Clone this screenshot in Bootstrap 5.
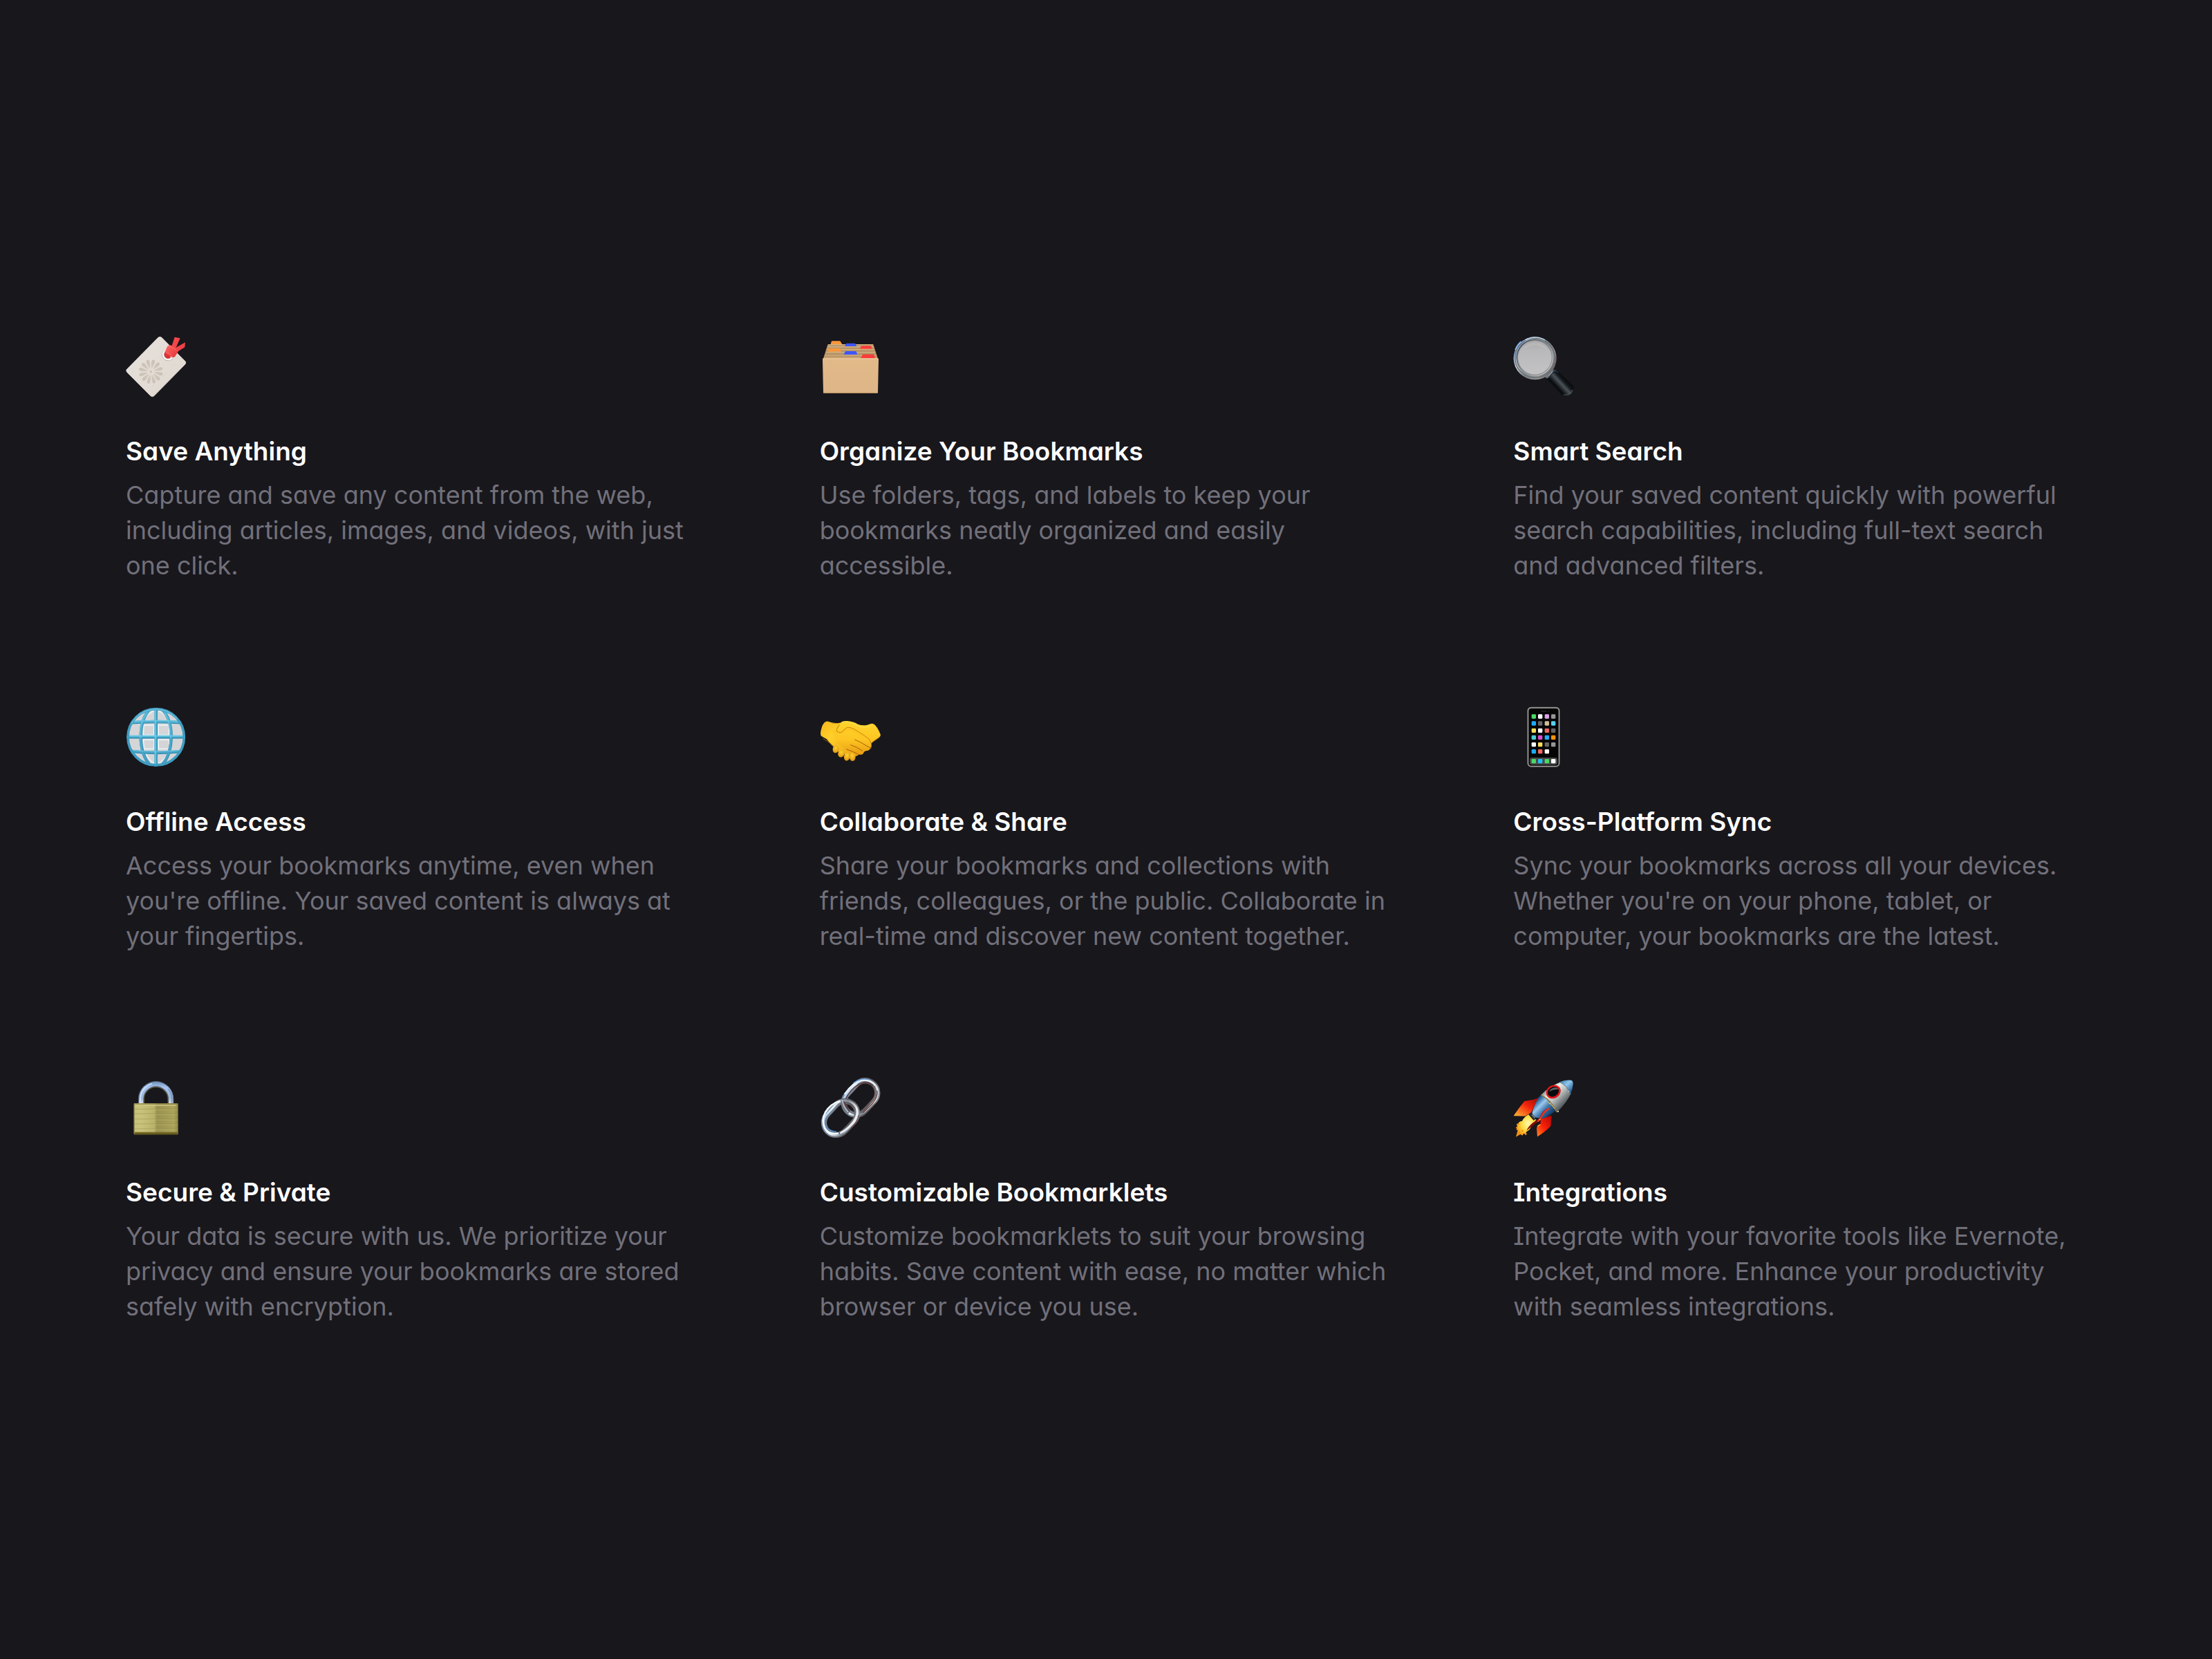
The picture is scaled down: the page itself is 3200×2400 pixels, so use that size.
<!DOCTYPE html>
<html lang="en">
<head>
<meta charset="utf-8">
<meta name="viewport" content="width=device-width, initial-scale=1">
<title>Features</title>
<link href="https://cdn.jsdelivr.net/npm/bootstrap@5.3.0/dist/css/bootstrap.min.css" rel="stylesheet">
<style>
  body {
    background: #18171c;
    color: #fff;
    font-family: Inter, "Liberation Sans", sans-serif;
    font-feature-settings: "cv11", "cv08";
  }
  .feature-wrap { padding: 2px 179px 0 182px; }
  .feature-grid { --bs-gutter-x: 172px; --bs-gutter-y: 178px; }
  .feature-icon { width: 88px; height: 88px; margin-bottom: 53px; display: block; overflow: visible; }
  .feature-title { font-size: 37px; line-height: 51px; font-weight: 600; margin-bottom: 13px; }
  .feature-text { font-size: 36px; line-height: 51px; color: #71707a; }
</style>
</head>
<body>
<main class="container-fluid feature-wrap min-vh-100 d-flex flex-column justify-content-center">
  <div class="row row-cols-3 feature-grid">

    <section class="col">
      <svg class="feature-icon" viewBox="36 33 264 264" aria-hidden="true">
        <defs>
          <linearGradient id="tagPaper" x1="0" y1="0" x2="1" y2="1"><stop offset="0" stop-color="#e7e2dc"/><stop offset="1" stop-color="#ded7cf"/></linearGradient>
          <linearGradient id="petalFill" x1="0" y1="0" x2="0" y2="1"><stop offset="0" stop-color="#c9c1b5"/><stop offset="1" stop-color="#d3cbc0"/></linearGradient>
          <linearGradient id="knotFill" x1="0" y1="0" x2="1" y2="1"><stop offset="0" stop-color="#ff6661"/><stop offset="1" stop-color="#e33337"/></linearGradient>
          <path id="petal" d="M0-9C-4-20-9-36-8-46Q-5-54 0-54Q5-54 8-46C9-36 4-20 0-9Z"/>
        </defs>
        <path d="M176 39Q184 33 192 39L294 142Q301 149 294 156L159 293Q151 300 143 293L40 190Q34 183 40 177Z" fill="url(#tagPaper)"/>
        <path d="M40 190L143 293Q151 300 159 293L294 156" fill="none" stroke="#c8bfb5" stroke-width="2"/>
        <path d="M147 71l9-8M60 190l14-5M235 165l18-9M202 208l8-12M152 251l7-6M100 117l14-11M250 126l14 6" stroke="#d7cfc6" stroke-width="2"/>
        <g transform="translate(145 188)" fill="url(#petalFill)" stroke="#eee9e2" stroke-width="1">
          <use href="#petal" transform="rotate(13)"/><use href="#petal" transform="rotate(43)"/><use href="#petal" transform="rotate(73)"/><use href="#petal" transform="rotate(103)"/><use href="#petal" transform="rotate(133)"/><use href="#petal" transform="rotate(163)"/><use href="#petal" transform="rotate(193)"/><use href="#petal" transform="rotate(223)"/><use href="#petal" transform="rotate(253)"/><use href="#petal" transform="rotate(283)"/><use href="#petal" transform="rotate(313)"/><use href="#petal" transform="rotate(343)"/>
        </g>
        <circle cx="145" cy="188" r="6" fill="#d0c7bb"/>
        <circle cx="216" cy="118" r="18" fill="#cfc7c0"/>
        <path d="M200 104L213 98L232 115L228 130L213 133L202 121Z" fill="#dc3236"/>
        <path d="M203 100A21 21 0 1 0 237 129" fill="none" stroke="#aaa39e" stroke-width="10"/>
        <path d="M203 99A21 21 0 1 0 237 128" fill="none" stroke="#f8f7f5" stroke-width="7"/>
        <path d="M234 80L248 38L272 43L250 91Z" fill="#f24649"/>
        <path d="M247 87L294 61L292 82L255 105Z" fill="#ef4246"/>
        <path d="M216 79Q224 68 236 76L260 91Q267 96 261 105L249 123Q243 128 235 124L212 111Q205 106 208 98Z" fill="url(#knotFill)"/>
        <path d="M218 82Q226 75 235 81L257 95M213 101L238 119" fill="none" stroke="#ff7873" stroke-width="2"/>
      </svg>
      <h2 class="feature-title">Save Anything</h2>
      <p class="feature-text mb-0">Capture and save any content from the web, including articles, images, and videos, with just one click.</p>
    </section>

    <section class="col">
      <svg class="feature-icon" viewBox="33 33 264 264" aria-hidden="true">
        <defs>
          <linearGradient id="boxFront" x1="0" y1="0" x2="0" y2="1"><stop offset="0" stop-color="#e2ba8a"/><stop offset="1" stop-color="#deb586"/></linearGradient>
          <linearGradient id="dividerFill" x1="0" y1="0" x2="0" y2="1"><stop offset="0" stop-color="#dfba87"/><stop offset="1" stop-color="#9c7b52"/></linearGradient>
          <clipPath id="dividerClip"><path d="M70 50H262Q265 69 266 73L286 134H47L66 74Z"/></clipPath>
        </defs>
        <path d="M70 69H262Q265 69 266 73L286 134H47L66 74Q67 69 70 69Z" fill="#b28e60"/>
        <path d="M80 69L83 58Q84 55 88 55H118Q122 55 124 59L130 69Z" fill="#fa963b"/>
        <g clip-path="url(#dividerClip)">
          <rect x="69" y="69" width="196" height="11" fill="url(#dividerFill)"/>
          <path d="M141 78L145 69Q147 65 151 65H183Q187 65 189 69L193 78Z" fill="#3e55f8"/>
          <rect x="66" y="78" width="202" height="12" fill="url(#dividerFill)"/>
          <path d="M206 90L211 80Q213 76 217 76H251Q255 76 257 80L261 90Z" fill="#fa3c3b"/>
          <rect x="62" y="89" width="208" height="13" fill="url(#dividerFill)"/>
          <path d="M68 101L71 91Q73 87 77 87H116Q120 87 122 91L126 101Z" fill="#fa963b"/>
          <rect x="59" y="101" width="215" height="14" fill="url(#dividerFill)"/>
          <path d="M137 115L142 103Q144 99 148 99H186Q190 99 192 103L196 115Z" fill="#3e55f8"/>
          <rect x="55" y="114" width="223" height="10" fill="url(#dividerFill)"/>
          <rect x="51" y="122" width="230" height="10" fill="#c7a06f"/>
        </g>
        <path d="M211 130L217 117Q219 113 223 113H263Q267 113 269 117L274 130Z" fill="#fa3c3b"/>
        <path d="M48 130H284Q288 130 288 135L285 278Q285 282 281 282H52Q48 282 48 278L45 135Q45 130 48 130Z" fill="url(#boxFront)"/>
        <path d="M47 132H286" stroke="#efcea3" stroke-width="3"/><path d="M49 280H284" stroke="#b9915f" stroke-width="3"/>
      </svg>
      <h2 class="feature-title">Organize Your Bookmarks</h2>
      <p class="feature-text mb-0">Use folders, tags, and labels to keep your bookmarks neatly organized and easily accessible.</p>
    </section>

    <section class="col">
      <svg class="feature-icon" viewBox="27 33 264 264" aria-hidden="true">
        <defs>
          <linearGradient id="rimOuter" x1="0" y1=".2" x2="1" y2=".8"><stop offset="0" stop-color="#6eaaf0"/><stop offset=".25" stop-color="#dbe3ea"/><stop offset=".5" stop-color="#7b848c"/><stop offset=".75" stop-color="#949494"/><stop offset="1" stop-color="#5b5b5e"/></linearGradient>
          <linearGradient id="rimInner" x1="0" y1="0" x2="1" y2="1"><stop offset="0" stop-color="#2c3b49"/><stop offset=".5" stop-color="#85898c"/><stop offset="1" stop-color="#cfcfcf"/></linearGradient>
          <linearGradient id="lensFill" x1="0" y1="0" x2="0" y2="1"><stop offset="0" stop-color="#aaa9ab"/><stop offset=".3" stop-color="#b9b8ba"/><stop offset="1" stop-color="#c3c2c4"/></linearGradient>
          <linearGradient id="gripFill" gradientUnits="userSpaceOnUse" x1="204" y1="262" x2="258" y2="212"><stop offset="0" stop-color="#15181b"/><stop offset=".2" stop-color="#090b0e"/><stop offset=".52" stop-color="#4c5359"/><stop offset=".72" stop-color="#14181c"/><stop offset="1" stop-color="#050506"/></linearGradient>
        </defs>
        <path d="M163 211L184 181L212 181L199 196L178 221Q171 213 163 211Z" fill="#77797b"/>
        <path d="M182 210L201 187" stroke="#d8d8d8" stroke-width="6"/>
        <circle cx="122" cy="130" r="93" fill="url(#rimOuter)"/>
        <circle cx="121" cy="128" r="86" fill="none" stroke="#6b7177" stroke-width="5"/>
        <circle cx="121" cy="127" r="81" fill="url(#rimInner)"/>
        <circle cx="121" cy="127" r="76" fill="#8d8e91"/>
        <circle cx="121" cy="127" r="73" fill="url(#lensFill)"/>
        <path d="M66 96Q86 61 123 61T178 98Q155 74 122 75T66 96Z" fill="#c8c8c9" opacity=".35"/>
        <path d="M61 57A93 93 0 0 0 36 93" fill="none" stroke="#8bc0fc" stroke-width="5"/>
        <path d="M80 50A90 90 0 0 1 166 51" fill="none" stroke="#c3dcf3" stroke-width="4"/>
        <path d="M213 118A93 93 0 0 1 206 167" fill="none" stroke="#754c49" stroke-width="3"/>
        <path d="M174 218L202 184Q215 178 227 191L287 249Q298 264 281 281Q263 299 244 294Q240 293 237 290L180 231Z" fill="url(#gripFill)"/>
        <path d="M179 216L204 187Q214 183 223 192" fill="none" stroke="#26364b" stroke-width="4"/>
        <path d="M245 289Q271 292 286 267" fill="none" stroke="#4c5054" stroke-width="4"/>
      </svg>
      <h2 class="feature-title">Smart Search</h2>
      <p class="feature-text mb-0">Find your saved content quickly with powerful search capabilities, including full-text search and advanced filters.</p>
    </section>

    <section class="col">
      <svg class="feature-icon" viewBox="36 30 264 264" aria-hidden="true">
        <defs>
          <linearGradient id="globeLine" x1="0" y1="0" x2="0" y2="1"><stop offset="0" stop-color="#53b7d8"/><stop offset="1" stop-color="#429fc4"/></linearGradient>
          <clipPath id="globeClip"><circle cx="167" cy="163" r="127"/></clipPath>
        </defs>
        <circle cx="167" cy="163" r="124" fill="#d5d5d8"/>
        <g clip-path="url(#globeClip)" fill="none">
          <g stroke="#eaf6fa" stroke-width="4"><path d="M114 111H158V154H112ZM178 111H223V154H178ZM112 174H158V214H116ZM178 174H224V214H178Z"/><path d="M123 232Q133 262 158 276M219 232Q206 262 178 276M116 91Q127 62 158 49M220 91Q208 63 178 49"/></g>
          <g stroke="#2f88aa" stroke-width="13"><path d="M48 101Q167 91 287 101M40 163H294M50 224Q167 238 286 224"/><path d="M167 36V291M143 39Q100 83 101 163T143 287M191 39Q234 83 233 163T191 287"/></g>
          <g stroke="url(#globeLine)" stroke-width="10"><path d="M48 99Q167 90 287 99M50 222Q167 236 286 222M143 39Q99 83 100 163T143 287M191 39Q234 83 232 163T191 287"/></g>
          <path d="M40 160H294M165 36V291" stroke="#54b8d9" stroke-width="9"/>
          <path d="M50 96Q167 86 285 96M42 157H292M52 219Q167 232 284 219M163 38V289M96 163Q96 97 124 61M228 163Q228 97 205 61" stroke="#8bd8ee" stroke-width="2"/>
        </g>
        <circle cx="167" cy="163" r="122" fill="none" stroke="#3f9dc1" stroke-width="11"/>
        <path d="M60 105A122 122 0 0 1 260 85" fill="none" stroke="#84d2e9" stroke-width="3"/>
      </svg>
      <h2 class="feature-title">Offline Access</h2>
      <p class="feature-text mb-0">Access your bookmarks anytime, even when you're offline. Your saved content is always at your fingertips.</p>
    </section>

    <section class="col">
      <svg class="feature-icon" viewBox="33 30 264 264" aria-hidden="true">
        <defs>
          <linearGradient id="skinMain" x1="0" y1="0" x2="0" y2="1"><stop offset="0" stop-color="#ffd52e"/><stop offset=".55" stop-color="#fdc522"/><stop offset="1" stop-color="#e89d12"/></linearGradient>
          <linearGradient id="skinArm" x1="0" y1="0" x2="1" y2="1"><stop offset="0" stop-color="#f7b51b"/><stop offset=".35" stop-color="#ffd02a"/><stop offset="1" stop-color="#e8a014"/></linearGradient>
          <radialGradient id="skinTip" cx=".45" cy=".35" r=".7"><stop offset="0" stop-color="#ffd231"/><stop offset="1" stop-color="#dc920f"/></radialGradient>
        </defs>
        <path d="M54 99Q62 91 74 97Q94 105 119 101L151 108L198 150L204 231Q202 245 188 246L120 235L96 207Q74 187 63 172L39 158Q33 149 40 126Q44 108 54 99Z" fill="url(#skinArm)"/>
        <g fill="url(#skinTip)"><ellipse cx="102" cy="215" rx="13" ry="17" transform="rotate(12 102 215)"/><ellipse cx="126" cy="234" rx="14" ry="17" transform="rotate(18 126 234)"/><ellipse cx="151" cy="248" rx="13" ry="18" transform="rotate(14 151 248)"/><ellipse cx="175" cy="249" rx="13" ry="18"/></g>
        <path d="M107 135Q103 128 111 117L124 99Q133 92 151 93Q179 95 198 107Q216 114 236 111L255 105Q264 103 273 111Q287 126 296 151Q298 160 290 164L266 181L256 191Q260 204 252 213Q246 223 233 223Q224 225 221 235Q214 243 199 237L150 219L108 189L90 150Z" fill="url(#skinMain)"/>
        <path d="M91 136Q116 152 138 134L155 126Q191 137 226 162" fill="none" stroke="#fdc522" stroke-width="12"/>
        <path d="M106 134Q109 144 124 143Q132 142 139 130Q149 117 165 121Q184 128 205 142T246 171L256 190" fill="none" stroke="#cf850c" stroke-width="3"/>
        <path d="M185 174Q209 184 236 201T254 207M167 197Q193 205 218 223M149 216Q172 223 198 237" fill="none" stroke="#a76004" stroke-width="3" stroke-linecap="round"/>
        <path d="M107 136Q104 126 119 109" fill="none" stroke="#bb7509" stroke-width="3"/>
        <path d="M84 102Q104 106 116 103M47 169Q76 184 94 207M256 187Q268 182 292 164" fill="none" stroke="#c4830e" stroke-width="3" opacity=".7"/>
        <path d="M131 98Q160 94 194 112T258 112" fill="none" stroke="#ffe454" stroke-width="4" opacity=".8"/>
      </svg>
      <h2 class="feature-title">Collaborate &amp; Share</h2>
      <p class="feature-text mb-0">Share your bookmarks and collections with friends, colleagues, or the public. Collaborate in real-time and discover new content together.</p>
    </section>

    <section class="col">
      <svg class="feature-icon" viewBox="27 30 264 264" aria-hidden="true">
        <rect x="88" y="32" width="142" height="261" rx="17" fill="#696967"/>
        <rect x="90" y="34" width="138" height="257" rx="15" fill="#a3a29f"/>
        <rect x="94" y="38" width="130" height="249" rx="12" fill="#050506"/>
        <rect x="147" y="48" width="26" height="5" rx="2" fill="#202022"/><circle cx="181" cy="51" r="3" fill="#202027"/>
        <rect x="99" y="252" width="120" height="31" rx="10" fill="#4a4a4b"/>
        <g>
          <g fill="#4cd964"><rect x="107" y="64" width="19" height="19" rx="4"/><rect x="107" y="258" width="19" height="19" rx="4"/><rect x="164" y="258" width="19" height="19" rx="4"/></g>
          <g fill="#fff"><rect x="135" y="64" width="19" height="19" rx="4"/><rect x="135" y="125" width="19" height="19" rx="4"/><rect x="107" y="186" width="19" height="19" rx="4"/><rect x="164" y="216" width="19" height="19" rx="4"/><rect x="192" y="258" width="19" height="19" rx="4"/></g>
          <g fill="#20aaf7"><rect x="107" y="94" width="19" height="19" rx="4"/><rect x="164" y="155" width="19" height="19" rx="4"/><rect x="107" y="216" width="19" height="19" rx="4"/></g>
          <g fill="#656565"><rect x="135" y="94" width="19" height="19" rx="4"/><rect x="192" y="125" width="19" height="19" rx="4"/><rect x="164" y="186" width="19" height="19" rx="4"/></g>
          <g fill="#969696"><rect x="192" y="64" width="19" height="19" rx="4"/><rect x="192" y="186" width="19" height="19" rx="4"/></g>
          <g fill="#ffdc59"><rect x="107" y="125" width="19" height="19" rx="4"/><rect x="135" y="186" width="19" height="19" rx="4"/></g>
          <g fill="#ef665c"><rect x="164" y="125" width="19" height="19" rx="4"/><rect x="135" y="216" width="19" height="19" rx="4"/></g>
          <rect x="164" y="64" width="19" height="19" rx="4" fill="#dba3e7"/>
          <rect x="164" y="94" width="19" height="19" rx="4" fill="#d3bd98"/>
          <rect x="192" y="94" width="19" height="19" rx="4" fill="#56d2ec"/>
          <rect x="107" y="155" width="19" height="19" rx="4" fill="#4acbd3"/>
          <rect x="135" y="155" width="19" height="19" rx="4" fill="#d74bd4"/>
          <rect x="192" y="155" width="19" height="19" rx="4" fill="#ff9208"/>
          <rect x="135" y="258" width="19" height="19" rx="4" fill="#1bc1f4"/>
        </g>
      </svg>
      <h2 class="feature-title">Cross-Platform Sync</h2>
      <p class="feature-text mb-0">Sync your bookmarks across all your devices. Whether you're on your phone, tablet, or computer, your bookmarks are the latest.</p>
    </section>

    <section class="col">
      <svg class="feature-icon" viewBox="36 30 264 264" aria-hidden="true">
        <defs>
          <linearGradient id="brass" x1="0" y1="0" x2="1" y2="0"><stop offset="0" stop-color="#c9c278"/><stop offset=".15" stop-color="#c8c27b"/><stop offset=".46" stop-color="#b9b26a"/><stop offset=".52" stop-color="#99914f"/><stop offset=".9" stop-color="#aaa35a"/><stop offset="1" stop-color="#8f8644"/></linearGradient>
          <linearGradient id="shackle" x1="0" y1="0" x2="0" y2="1"><stop offset="0" stop-color="#7393bb"/><stop offset=".25" stop-color="#a4c3ef"/><stop offset=".75" stop-color="#9db4d4"/><stop offset="1" stop-color="#d8dbe0"/></linearGradient>
        </defs>
        <path d="M90 146V125A77 77 0 0 1 244 125V146H219V126A52 52 0 0 0 115 126V146Z" fill="#58677a"/>
        <path d="M93 146V125A74 74 0 0 1 241 125V146H222V125A55 55 0 0 0 112 125V146Z" fill="url(#shackle)"/>
        <path d="M100 145V123A67 67 0 0 1 150 59" fill="none" stroke="#d8e8ff" stroke-width="4"/>
        <path d="M236 145V125A67 67 0 0 0 220 82" fill="none" stroke="#708eba" stroke-width="4"/>
        <path d="M115 145V126A52 52 0 0 1 219 126V145" fill="none" stroke="#5e5740" stroke-width="4"/>
        <rect x="71" y="144" width="192" height="136" rx="3" fill="url(#brass)"/>
        <path d="M73 147H261" stroke="#77703a" stroke-width="3"/><path d="M78 153H256" stroke="#d0c986" stroke-width="5"/>
        <path d="M74 170H260M74 190H260M74 213H260M74 234H260M74 255H260" stroke="#8c8548" stroke-width="2" opacity=".75"/>
        <path d="M74 173H260M74 193H260M74 216H260M74 237H260M74 258H260" stroke="#d4ce8a" stroke-width="2" opacity=".6"/>
        <path d="M74 269H260L263 280H71Z" fill="#706523"/><path d="M74 279H260" stroke="#423a13" stroke-width="3"/>
        <path d="M73 148V275" stroke="#8e874c" stroke-width="3"/>
      </svg>
      <h2 class="feature-title">Secure &amp; Private</h2>
      <p class="feature-text mb-0">Your data is secure with us. We prioritize your privacy and ensure your bookmarks are stored safely with encryption.</p>
    </section>

    <section class="col">
      <svg class="feature-icon" viewBox="33 30 264 264" aria-hidden="true">
        <defs>
          <linearGradient id="steelA" x1="0" y1="0" x2="1" y2="1"><stop offset="0" stop-color="#6e8093"/><stop offset=".3" stop-color="#788390"/><stop offset=".7" stop-color="#5d5355"/><stop offset="1" stop-color="#8c8f92"/></linearGradient>
          <linearGradient id="steelB" x1="0" y1="0" x2="1" y2="1"><stop offset="0" stop-color="#8ab8ec"/><stop offset=".3" stop-color="#eef5fc"/><stop offset=".6" stop-color="#7c8894"/><stop offset=".85" stop-color="#e9eef3"/><stop offset="1" stop-color="#8fb0d6"/></linearGradient>
        </defs>
        <g fill="none">
          <g transform="rotate(-47 210 120)">
            <rect x="128" y="67" width="164" height="106" rx="53" stroke="url(#steelA)" stroke-width="25"/>
            <rect x="126" y="65" width="168" height="110" rx="55" stroke="url(#steelB)" stroke-width="9"/>
          </g>
          <path d="M155 164Q136 136 154 108Q182 65 220 56Q244 50 263 67" stroke="#5b3436" stroke-width="4"/>
          <path d="M142 103Q177 53 216 45Q251 40 272 65" stroke="#e8f5ff" stroke-width="7" stroke-linecap="round"/>
          <path d="M180 55Q216 30 253 43" stroke="#5f9be0" stroke-width="4" stroke-linecap="round"/>
          <path d="M282 89Q287 116 260 147L219 186" stroke="#703f3d" stroke-width="4"/>
          <g transform="rotate(-47 123 208)">
            <rect x="42" y="155" width="162" height="106" rx="53" stroke="url(#steelA)" stroke-width="25"/>
            <rect x="40" y="153" width="166" height="110" rx="55" stroke="url(#steelB)" stroke-width="9"/>
          </g>
          <path d="M119 135Q80 146 57 183Q38 219 55 253Q72 281 111 275" stroke="#f3faff" stroke-width="8" stroke-linecap="round"/>
          <path d="M62 241Q72 268 105 267" stroke="#548bc8" stroke-width="5"/>
          <path d="M193 167Q201 193 177 227Q150 260 121 274" stroke="#e5eef8" stroke-width="8"/>
          <path d="M202 196Q197 224 167 254" stroke="#6e4844" stroke-width="4"/>
          <path d="M132 133Q134 163 160 185" stroke="#6d7277" stroke-width="17"/>
          <path d="M130 131Q134 158 156 183" stroke="#bdc9d4" stroke-width="4"/>
          <path d="M140 138Q144 159 163 178" stroke="#482e32" stroke-width="4"/>
        </g>
      </svg>
      <h2 class="feature-title">Customizable Bookmarklets</h2>
      <p class="feature-text mb-0">Customize bookmarklets to suit your browsing habits. Save content with ease, no matter which browser or device you use.</p>
    </section>

    <section class="col">
      <svg class="feature-icon" viewBox="27 30 264 264" aria-hidden="true">
        <defs>
          <linearGradient id="rocketBody" gradientUnits="userSpaceOnUse" x1="157" y1="91" x2="230" y2="165"><stop offset="0" stop-color="#768084"/><stop offset=".28" stop-color="#eef0ed"/><stop offset=".6" stop-color="#b4b8b8"/><stop offset="1" stop-color="#555c60"/></linearGradient>
          <linearGradient id="rocketBlue" gradientUnits="userSpaceOnUse" x1="128" y1="134" x2="190" y2="195"><stop offset="0" stop-color="#1d5b91"/><stop offset=".3" stop-color="#9bc8ef"/><stop offset=".6" stop-color="#4077aa"/><stop offset="1" stop-color="#123b67"/></linearGradient>
          <linearGradient id="noseBlue" gradientUnits="userSpaceOnUse" x1="239" y1="45" x2="285" y2="94"><stop offset="0" stop-color="#4784b3"/><stop offset=".4" stop-color="#8fc9ed"/><stop offset="1" stop-color="#164e83"/></linearGradient>
          <linearGradient id="finLeft" x1="1" y1="0" x2="0" y2="1"><stop offset="0" stop-color="#930b06"/><stop offset=".45" stop-color="#f3220b"/><stop offset="1" stop-color="#ffbd38"/></linearGradient>
          <linearGradient id="finRight" x1="1" y1="0" x2="0" y2="1"><stop offset="0" stop-color="#b20606"/><stop offset=".55" stop-color="#fb2108"/><stop offset="1" stop-color="#ff8b22"/></linearGradient>
          <radialGradient id="flame" cx=".6" cy=".4" r=".65"><stop offset="0" stop-color="#fffbb3"/><stop offset=".5" stop-color="#ffdc43"/><stop offset="1" stop-color="#f38e11"/></radialGradient>
        </defs>
        <path d="M139 119L116 128L76 135Q53 162 29 199L79 200L106 184L118 158Z" fill="url(#finLeft)"/>
        <path d="M194 197L190 243Q163 271 132 289L129 250L146 233L146 212Z" fill="url(#finRight)"/>
        <path d="M94 193Q76 202 66 221Q49 223 49 235L42 233L45 246L40 259L47 260L39 290L58 279L68 284L72 275L84 280L83 269Q99 261 105 247Q119 229 127 215Z" fill="url(#flame)"/>
        <g fill="#ef8e11"><circle cx="50" cy="234" r="4"/><circle cx="42" cy="249" r="3"/><circle cx="54" cy="270" r="4"/><circle cx="82" cy="278" r="4"/><circle cx="68" cy="264" r="4"/></g>
        <path d="M139 118L155 102L205 164L210 177Q181 203 154 211L126 206L108 190Q119 149 139 118Z" fill="url(#rocketBlue)"/>
        <path d="M148 108Q184 69 236 51Q267 66 279 99Q260 142 217 183Q187 128 148 108Z" fill="url(#rocketBody)"/>
        <path d="M229 52Q250 41 279 44Q288 48 287 60Q286 83 276 104Q263 68 229 52Z" fill="url(#noseBlue)"/>
        <path d="M148 108Q190 129 217 183" fill="none" stroke="#8c7940" stroke-width="5"/>
        <path d="M178 140Q198 152 207 168" fill="none" stroke="#f1cf58" stroke-width="3"/>
        <path d="M229 53Q263 67 276 108" fill="none" stroke="#62737b" stroke-width="3"/>
        <g fill="#eef0ed"><circle cx="235" cy="61" r="2"/><circle cx="253" cy="74" r="2"/><circle cx="268" cy="93" r="2"/><circle cx="170" cy="119" r="2"/><circle cx="189" cy="144" r="2"/><circle cx="222" cy="180" r="3"/></g>
        <ellipse cx="202" cy="95" rx="33" ry="27" transform="rotate(-31 202 95)" fill="#980807"/>
        <ellipse cx="201" cy="94" rx="29" ry="24" transform="rotate(-31 201 94)" fill="#080c0e" stroke="#ef171b" stroke-width="7"/>
        <path d="M184 94Q189 79 207 76Q222 75 222 84Q202 82 184 94Z" fill="#596167"/>
        <path d="M107 182L95 195L116 219L125 212L117 201Z" fill="#252b30"/><path d="M108 194L122 208" stroke="#78868d" stroke-width="5"/>
        <path d="M184 165Q162 179 149 208L133 225L84 264Q98 235 126 220L143 207Q151 179 178 166Z" fill="#850b08"/>
        <path d="M181 168Q158 181 147 208L135 222" fill="none" stroke="#f13024" stroke-width="7" stroke-linecap="round"/>
        <path d="M132 245L145 236M146 212L140 217" stroke="#f8be33" stroke-width="4"/>
      </svg>
      <h2 class="feature-title">Integrations</h2>
      <p class="feature-text mb-0">Integrate with your favorite tools like Evernote, Pocket, and more. Enhance your productivity with seamless integrations.</p>
    </section>

  </div>
</main>
<script src="https://cdn.jsdelivr.net/npm/bootstrap@5.3.0/dist/js/bootstrap.bundle.min.js"></script>
</body>
</html>
